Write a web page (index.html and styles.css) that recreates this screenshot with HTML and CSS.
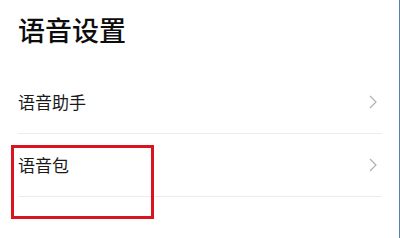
FILE: index.html
```html
<!DOCTYPE html>
<html lang="zh-CN">
<head>
<meta charset="utf-8">
<link rel="stylesheet" href="styles.css">
</head>
<body>
<div class="page">
  <h1 class="title">语音设置</h1>
  <div class="list">
    <div class="row">
      <span class="label">语音助手</span>
      <svg class="chev" width="8" height="14" viewBox="0 0 8 14"><polyline points="1,1 7,7 1,13" fill="none" stroke="#b0b0b0" stroke-width="1.2"/></svg>
    </div>
    <div class="row">
      <span class="label">语音包</span>
      <svg class="chev" width="8" height="14" viewBox="0 0 8 14"><polyline points="1,1 7,7 1,13" fill="none" stroke="#b0b0b0" stroke-width="1.2"/></svg>
    </div>
  </div>
  <div class="highlight"></div>
</div>
</body>
</html>
```

FILE: styles.css
```css
html, body {
  margin: 0;
  padding: 0;
  background: #ffffff;
}
.page {
  position: relative;
  width: 399px;
  height: 238px;
  border-right: 1px solid #5b7fb5;
  font-family: "Noto Sans CJK SC", "Noto Sans", sans-serif;
  color: #111111;
  overflow: hidden;
}
.title {
  margin: 0;
  padding: 10px 0 0 18px;
  height: 40px;
  line-height: 40px;
  font-size: 27px;
  font-weight: 500;
  color: #0d0d0d;
}
.list {
  margin: 21px 0 0 18px;
  width: 364px;
}
.row {
  height: 62px;
  border-bottom: 1px solid #ececec;
  display: flex;
  align-items: center;
  justify-content: space-between;
  padding-right: 5px;
}
.label {
  font-size: 17px;
  line-height: 20px;
  color: #1a1a1a;
}
.chev {
  display: block;
}
.highlight {
  position: absolute;
  left: 11px;
  top: 145px;
  width: 137px;
  height: 68px;
  border: 3px solid #d9141e;
}
```
